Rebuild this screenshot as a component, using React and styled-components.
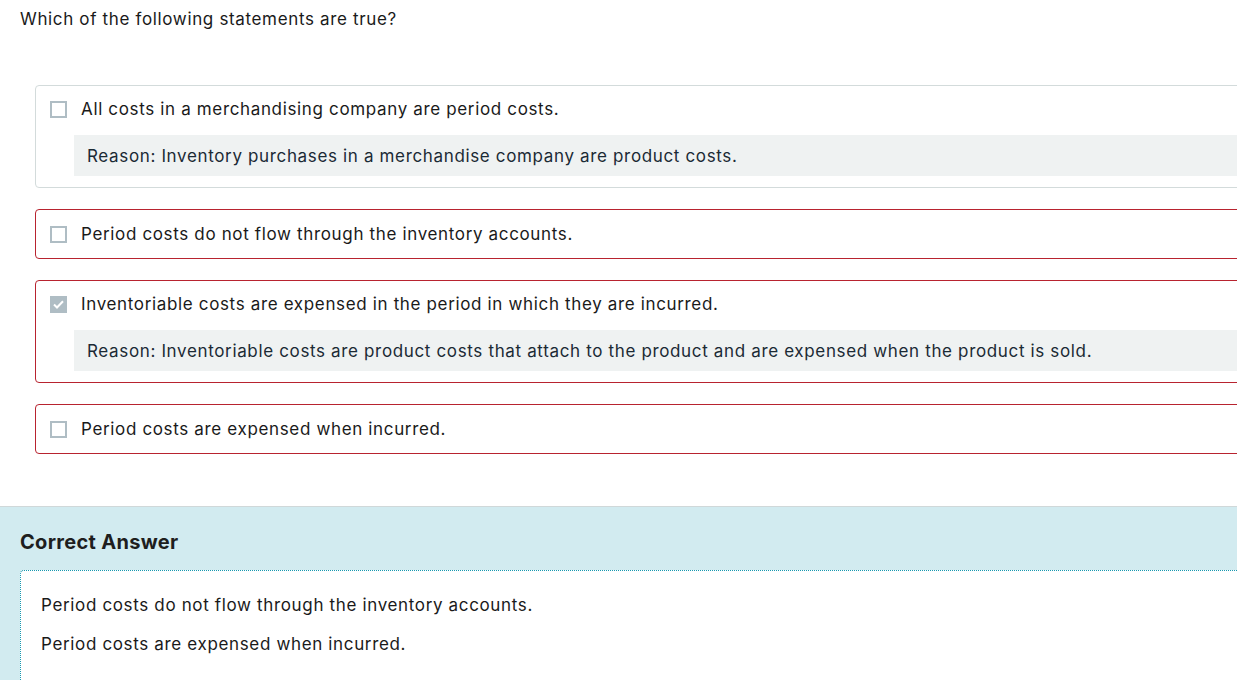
import React from "react";
import styled, { createGlobalStyle } from "styled-components";

const GlobalStyle = createGlobalStyle`
	body {
		margin: 0;
		background: #fff;
		font-family: Inter, "Liberation Sans", sans-serif;
		letter-spacing: 0.65px;
		color: #1a1a1a;
	}
`;

const Page = styled.div`
	width: 1237px;
	height: 680px;
	overflow: hidden;
`;

const Question = styled.div`
	padding: 7px 20px 0;
	font-size: 17px;
	line-height: 24px;
`;

const Choices = styled.div`
	display: flex;
	flex-direction: column;
	gap: 21px;
	margin: 54px -60px 0 35px;
`;

const Card = styled.div`
	border: 1px solid ${(p) => (p.$wrong ? "#b8232f" : "#d3dbdb")};
	border-radius: 4px;
	padding: ${(p) => (p.$reason ? "11px 14px 11px" : "12px 14px")};
`;

const Row = styled.div`
	display: flex;
	align-items: center;
	gap: 14px;
	font-size: 17px;
	line-height: 24px;
`;

const Box = styled.span`
	flex: none;
	width: 17px;
	height: 17px;
	box-sizing: border-box;
	border: 2px solid #afbdc4;
	background: ${(p) => (p.$checked ? "#afbdc4" : "#fff")};
	display: flex;
	align-items: center;
	justify-content: center;
`;

const Reason = styled.div`
	margin: 14px 0 0 24px;
	background: #eff2f2;
	padding: 0 13px;
	height: 41px;
	display: flex;
	align-items: center;
	font-size: 17px;
	color: #1b2a35;
`;

const AnswerSection = styled.div`
	margin-top: 52px;
	border-top: 1px solid #d0d8d9;
	background: #d2ebf0;
	padding: 20px 0 0 20px;
	height: 300px;
`;

const AnswerTitle = styled.div`
	font-size: 20px;
	font-weight: 700;
	letter-spacing: 0.3px;
	line-height: 30px;
	color: #1e1e1e;
`;

const AnswerBox = styled.div`
	margin-top: 13px;
	background: #fff;
	border-top: 1px dotted #1798b0;
	border-left: 1px dotted #1798b0;
	border-top-left-radius: 4px;
	padding: 22px 20px;
	height: 200px;
	display: flex;
	flex-direction: column;
	gap: 15px;
`;

const AnswerLine = styled.div`
	font-size: 17px;
	line-height: 24px;
`;

const Check = () => (
	<svg width="11" height="9" viewBox="0 0 11 9">
		<path d="M1 4.5 L4 7.5 L10 1.2" fill="none" stroke="#fff" strokeWidth="2" />
	</svg>
);

const choices = [
	{
		text: "All costs in a merchandising company are period costs.",
		reason: "Reason: Inventory purchases in a merchandise company are product costs.",
	},
	{ text: "Period costs do not flow through the inventory accounts.", wrong: true },
	{
		text: "Inventoriable costs are expensed in the period in which they are incurred.",
		reason:
			"Reason: Inventoriable costs are product costs that attach to the product and are expensed when the product is sold.",
		wrong: true,
		checked: true,
	},
	{ text: "Period costs are expensed when incurred.", wrong: true },
];

export default function App() {
	return (
		<Page>
			<GlobalStyle />
			<Question>Which of the following statements are true?</Question>
			<Choices>
				{choices.map((c, i) => (
					<Card key={i} $wrong={c.wrong} $reason={!!c.reason}>
						<Row>
							<Box $checked={c.checked}>{c.checked && <Check />}</Box>
							{c.text}
						</Row>
						{c.reason && <Reason>{c.reason}</Reason>}
					</Card>
				))}
			</Choices>
			<AnswerSection>
				<AnswerTitle>Correct Answer</AnswerTitle>
				<AnswerBox>
					<AnswerLine>Period costs do not flow through the inventory accounts.</AnswerLine>
					<AnswerLine>Period costs are expensed when incurred.</AnswerLine>
				</AnswerBox>
			</AnswerSection>
		</Page>
	);
}
